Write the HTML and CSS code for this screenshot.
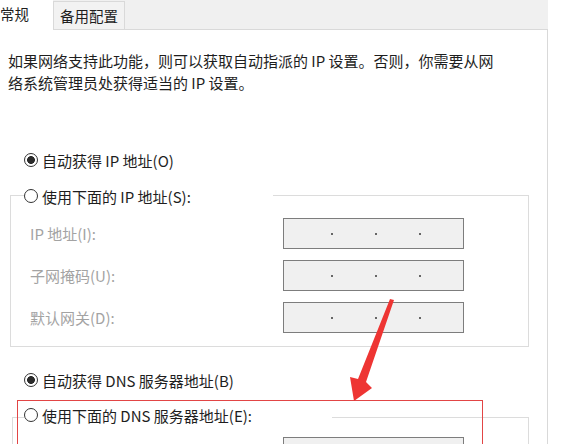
FILE: index.html
```html
<!DOCTYPE html>
<html lang="zh-CN">
<head>
<meta charset="utf-8">
<title>IPv4 属性</title>
<link rel="stylesheet" href="styles.css">
</head>
<body>
<div class="window">
  <div class="tabs">
    <div class="tab tab-active">常规</div>
    <div class="tab tab-alt">备用配置</div>
    <div class="tab-fill"></div>
  </div>
  <div class="panel">
    <p class="desc">如果网络支持此功能，则可以获取自动指派的 IP 设置。否则，你需要从网<br>络系统管理员处获得适当的 IP 设置。</p>

    <div class="radio-row first"><span class="radio checked"></span>自动获得 IP 地址(O)</div>

    <div class="group group-ip">
      <div class="legend legend-ip"><span class="radio"></span>使用下面的 IP 地址(S):</div>
      <div class="field"><span class="field-label">IP 地址(I):</span><div class="ip-box"><i></i><i></i><i></i></div></div>
      <div class="field"><span class="field-label">子网掩码(U):</span><div class="ip-box"><i></i><i></i><i></i></div></div>
      <div class="field"><span class="field-label">默认网关(D):</span><div class="ip-box"><i></i><i></i><i></i></div></div>
    </div>

    <div class="radio-row dns"><span class="radio checked"></span>自动获得 DNS 服务器地址(B)</div>

    <div class="group group-dns">
      <div class="legend legend-dns"><span class="radio"></span>使用下面的 DNS 服务器地址(E):</div>
      <div class="field field-dns"><span class="field-label"></span><div class="ip-box"><i></i><i></i><i></i></div></div>
    </div>
  </div>

  <div class="highlight"></div>
  <svg class="arrow" width="573" height="444" viewBox="0 0 573 444">
    <polygon points="390,299 394,300 366,382 372,388 354,401 350,377 358,379" fill="#ee3533"/>
  </svg>
</div>
</body>
</html>
```

FILE: styles.css
```css
* { box-sizing: border-box; }

html, body {
  margin: 0;
  padding: 0;
  background: #ffffff;
}

body {
  font-family: "Noto Sans CJK SC", "Noto Sans", sans-serif;
  font-size: 15px;
  color: #1e1e1e;
}

.window {
  position: relative;
  width: 573px;
  height: 444px;
  overflow: hidden;
  background: #ffffff;
}

.tabs {
  display: flex;
  width: 548px;
  height: 30px;
  background: #f0f0f0;
}

.tab {
  font-size: 14.5px;
  white-space: nowrap;
}

.tab-active {
  width: 53px;
  height: 30px;
  line-height: 28px;
  background: #ffffff;
  padding-left: 0;
}

.tab-alt {
  margin-top: 1px;
  height: 29px;
  line-height: 27px;
  padding: 0 6px 0 6px;
  border: 1px solid #d9d9d9;
  background: #f2f2f2;
}

.tab-fill {
  flex: 1;
  height: 30px;
  border-bottom: 1px solid #d9d9d9;
}

.panel {
  width: 548px;
  height: 414px;
  background: #ffffff;
  border-right: 1px solid #d9d9d9;
  padding-top: 20px;
}

.desc {
  margin: 0;
  padding-left: 8px;
  line-height: 22px;
  white-space: nowrap;
}

.radio-row {
  display: flex;
  align-items: center;
  gap: 4px;
  height: 22px;
  padding-left: 24px;
  white-space: nowrap;
}

.radio-row.first { margin-top: 55px; }
.radio-row.dns { margin-top: 22px; }

.radio {
  flex: none;
  width: 14px;
  height: 14px;
  border: 1px solid #333333;
  border-radius: 50%;
  background: #ffffff;
}

.radio.checked {
  background: radial-gradient(circle, #2b2b2b 0 3.6px, #ffffff 4.2px);
}

.group {
  border: 1px solid #dcdcdc;
  padding-bottom: 13px;
}

.group-ip {
  margin: 24px 0 0 10px;
  width: 519px;
}

.group-dns {
  margin: 26px 0 0 12px;
  width: 517px;
  height: 80px;
}

.legend {
  display: flex;
  align-items: center;
  gap: 4px;
  height: 22px;
  background: #ffffff;
  white-space: nowrap;
}

.legend-ip {
  margin: -11px 0 0 13px;
  width: 249px;
}

.legend-dns {
  margin: -14px 0 0 11px;
  width: 308px;
}

.field {
  display: flex;
  align-items: center;
  height: 31px;
  margin-top: 11px;
  padding-left: 19px;
}

.field-dns {
  padding-left: 17px;
}

.field-label {
  width: 253px;
  color: #a3a3a3;
  white-space: nowrap;
}

.ip-box {
  display: flex;
  align-items: center;
  gap: 42px;
  width: 181px;
  height: 31px;
  padding-left: 47px;
  border: 1px solid #7d7d7d;
  background: #f0f0f0;
}

.ip-box i {
  display: block;
  width: 2px;
  height: 2px;
  background: #666666;
}

.highlight {
  position: absolute;
  left: 17px;
  top: 400px;
  width: 466px;
  height: 60px;
  border: 1px solid #e24545;
}

.arrow {
  position: absolute;
  left: 0;
  top: 0;
}
```
